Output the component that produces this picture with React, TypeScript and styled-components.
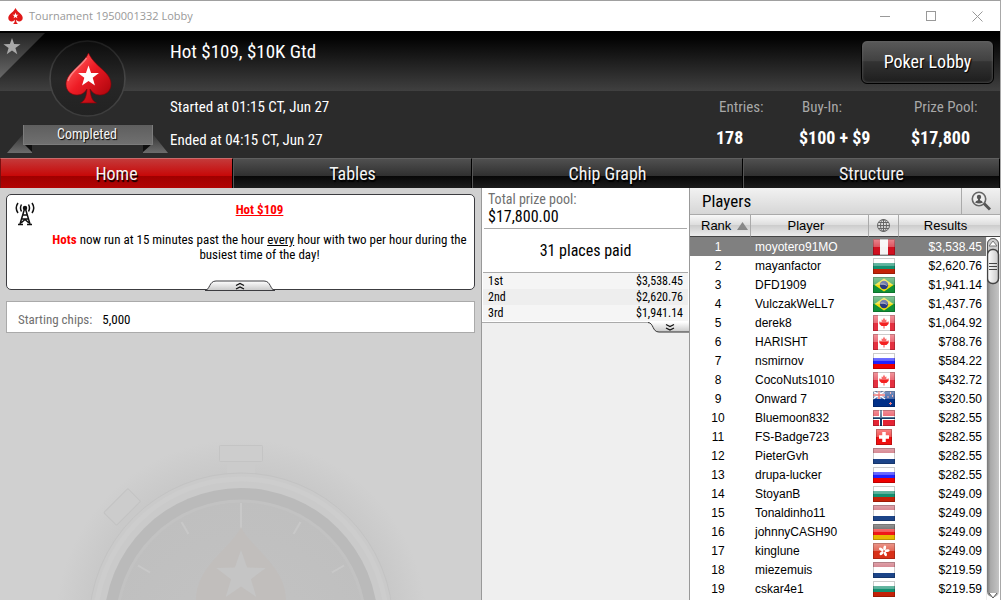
import React from 'react';
import styled, { createGlobalStyle } from 'styled-components';

const condensed = '"Roboto Condensed", "Liberation Sans Narrow", "Liberation Sans", sans-serif';
const plain = '"Liberation Sans", Arial, sans-serif';

const Global = createGlobalStyle`
  *, *::before, *::after { box-sizing: border-box; }
  body { margin: 0; font-family: ${condensed}; }
  button { font: inherit; color: inherit; background: none; border: 0; padding: 0; margin: 0; cursor: pointer; }
  svg { display: block; }
`;

const Window = styled.div`
  display: flex;
  flex-direction: column;
  height: 100vh;
  overflow: hidden;
  border-top: 1px solid #a0a0a0;
  border-right: 1px solid #a8a8a8;
  background: #fff;
`;

const TitleBar = styled.div`
  display: flex;
  align-items: center;
  flex: none;
  height: 30px;
  padding-left: 8px;
  gap: 6px;
  background: #fff;
`;

const WindowTitle = styled.h1`
  flex: 1;
  margin: 0;
  font: 400 11px/16px "Open Sans", "Noto Sans", sans-serif;
  color: #999;
`;

const WindowControls = styled.div`
  display: flex;
`;

const WindowButton = styled.button`
  display: grid;
  place-items: center;
  width: 46px;
  height: 30px;
`;

const Header = styled.header`
  display: flex;
  flex: none;
  height: 127px;
  color: #fff;
  background: linear-gradient(#000, #040404 8px, #404040 60px, #2b2b2b 60px);
`;

const Emblem = styled.div`
  display: grid;
  flex: none;
  width: 170px;
  height: 127px;

  > * { grid-area: 1 / 1; }
`;

const RibbonText = styled.div`
  align-self: end;
  width: 174px;
  padding-bottom: 15px;
  font-size: 14px;
  line-height: 18px;
  text-align: center;
  color: #f4f4f4;
  text-shadow: 1px 1px 1px #000;
`;

const HeaderBody = styled.div`
  flex: 1;
  min-width: 0;
`;

const HeaderTop = styled.div`
  display: flex;
  justify-content: space-between;
  height: 60px;
  padding: 9px 6px 0 0;
`;

const EventName = styled.h2`
  margin: 0;
  font-weight: 400;
  font-size: 19px;
  line-height: 24px;
`;

const LobbyButton = styled.button`
  width: 133px;
  height: 44px;
  border: 1px solid #000;
  border-radius: 6px;
  font-size: 18px;
  line-height: 24px;
  color: #fff;
  text-shadow: 1px 1px 1px #000;
  background: linear-gradient(#5a5a5a, #414141 48%, #333 49%, #1d1d1d);
  box-shadow: inset 0 0 3px #666;
`;

const HeaderBottom = styled.div`
  display: flex;
  justify-content: space-between;
  height: 67px;
`;

const Dates = styled.div`
  font-size: 15px;
  line-height: 33px;
  white-space: nowrap;
`;

const Stats = styled.dl`
  display: grid;
  grid-template-columns: 83px 112px 89px;
  margin: 0;
`;

const StatLabel = styled.dt`
  padding-left: 3px;
  font-size: 15px;
  line-height: 33px;
  color: #a8a8a8;
`;

const StatValue = styled.dd`
  margin: 0;
  font-size: 18px;
  line-height: 28px;
  font-weight: 700;
  white-space: nowrap;
`;

const Tabs = styled.nav`
  display: grid;
  grid-template-columns: 233fr 239fr 271fr 257fr;
  flex: none;
  height: 30px;
  background: #000;
`;

const Tab = styled.button<{ $active?: boolean }>`
  border-top: 1px solid ${p => (p.$active ? '#c96a6a' : '#606060')};
  border-right: 1px solid #000;
  border-left: 1px solid ${p => (p.$active ? '#7a1010' : '#555')};
  font-size: 18px;
  line-height: 24px;
  color: #f4f4f4;
  text-shadow: 1px 2px 1px #000;
  background: ${p => (p.$active
    ? 'linear-gradient(#c43a3a, #c80808 58%, #a00000 60%, #b20404)'
    : 'linear-gradient(#505050, #303030 58%, #080808 60%, #1c1c1c)')};
`;

const Content = styled.main`
  display: flex;
  flex: 1;
  min-height: 0;
`;

const HomePanel = styled.section`
  display: flex;
  flex-direction: column;
  flex: 1;
  min-width: 0;
  padding: 6px 6px 0;
  background: #d0d0d0;
`;

const Notice = styled.div`
  position: relative;
  flex: none;
  height: 96px;
  padding: 5px 6px 0;
  border: 1px solid #3c3c40;
  border-radius: 5px;
  font-size: 13px;
  line-height: 15px;
  text-align: center;
  background: #fff;
  color: #000;
`;

const NoticeTitle = styled.a`
  display: block;
  margin: 2px 0 15px 38px;
  font-weight: 700;
  color: #f00;
`;

const NoticeText = styled.p`
  margin: 0 0 0 38px;

  strong { color: #f00; }
`;

const NoticeIcon = styled.div`
  position: absolute;
  top: 7px;
  left: 8px;
`;

const NoticeToggle = styled.button`
  position: absolute;
  left: 50%;
  bottom: -3px;
  width: 70px;
  height: 12px;
  margin-left: -36px;
`;

const ChipsBox = styled.div`
  flex: none;
  display: flex;
  gap: 10px;
  height: 32px;
  margin-top: 11px;
  padding-left: 11px;
  border: 1px solid #aaa;
  font-size: 13px;
  line-height: 36px;
  background: #fff;

  span { color: #707070; }
`;

const Watermark = styled.svg`
  flex: none;
  align-self: center;
  margin-top: auto;
`;

const PrizePanel = styled.section`
  flex: none;
  width: 209px;
  border: 0 solid #999;
  border-width: 0 1px;
  background: #efefef;
`;

const PrizeBox = styled.div`
  border-bottom: 1px solid #aaa;
  background: #fff;
`;

const PrizeTotal = styled.div`
  height: 41px;
  margin: 0 2px;
  padding: 3px 0 0 4px;
  border-bottom: 1px solid #aaa;
  font-size: 14px;
  line-height: 17px;
  color: #707070;

  strong { display: block; font-weight: 400; font-size: 16px; color: #000; }
`;

const PlacesPaid = styled.div`
  height: 44px;
  margin: 0 1px;
  border-bottom: 1px solid #aaa;
  font-size: 16px;
  line-height: 43px;
  text-align: center;
`;

const Payouts = styled.table`
  width: calc(100% - 2px);
  margin: 0 1px 1px;
  border-collapse: collapse;
  font-size: 12px;
  line-height: 16px;

  tr { background: #f5f5f5; }
  tr:nth-child(2) { background: #eee; }
  th { padding: 0 5px; font-weight: 400; text-align: left; }
  td { padding: 0 5px; text-align: right; }
`;

const PrizeToggle = styled.button`
  display: block;
  margin: -1px 0 0 auto;
`;

const PlayersPanel = styled.section`
  display: flex;
  flex-direction: column;
  flex: none;
  width: 310px;
  background: #fff;
`;

const PlayersHead = styled.div`
  display: flex;
  flex: none;
  height: 27px;
  border-bottom: 1px solid #aaa;
  background: linear-gradient(#f2f2f2, #d6d6d6);
`;

const PlayersTitle = styled.h3`
  flex: 1;
  margin: 0;
  padding-left: 12px;
  font-weight: 400;
  font-size: 17px;
  line-height: 27px;
`;

const SearchButton = styled.button`
  display: grid;
  place-items: center;
  width: 39px;
  border-left: 1px solid #aaa;
`;

const ListArea = styled.div`
  position: relative;
  flex: 1;
  min-height: 0;
  overflow: hidden;
`;

const PlayersTable = styled.table`
  width: 100%;
  table-layout: fixed;
  border-collapse: separate;
  border-spacing: 0;
  font-family: ${plain};
  font-size: 12px;
  line-height: 18px;
`;

const HeadCell = styled.th<{ $width?: number; $shift?: number }>`
  width: ${p => (p.$width ? `${p.$width}px` : 'auto')};
  height: 22px;
  padding: 0 ${p => p.$shift ?? 0}px 0 0;
  border-bottom: 1px solid #444;
  border-left: 1px solid #aaa;
  font-weight: 400;
  font-size: 13px;
  line-height: 20px;
  text-align: center;
  background: linear-gradient(#f8f8f8, #dcdcdc 50%, #cdcdcd 50%, #ececec);

  &:first-child { border-left: 0; }
  svg { margin: 0 auto; }
`;

const SortButton = styled.button`
  display: flex;
  align-items: center;
  gap: 6px;
  padding-left: 11px;
`;

const PlayerRow = styled.tr<{ $selected?: boolean }>`
  color: ${p => (p.$selected ? '#fff' : '#000')};
  background: ${p => (p.$selected ? '#808080' : '#fff')};

  td { height: 19px; padding: 1px 0 0; }
  td:nth-child(1) { text-align: center; padding-right: 4px; }
  td:nth-child(2) { padding-left: 5px; }
  td:nth-child(3) { padding-left: 5px; }
  td:nth-child(4) { text-align: right; padding-right: 18px; }
`;

const Scrollbar = styled.div`
  position: absolute;
  top: 22px;
  right: 0;
  bottom: 0;
  width: 14px;
  border-left: 1px solid #eee;
  background: #fff;
`;

const starPath = (cx: number, cy: number, r: number) => {
  const pts: string[] = [];
  for (let i = 0; i < 10; i++) {
    const rad = i % 2 ? r * 0.4 : r;
    const a = (Math.PI * i) / 5 - Math.PI / 2;
    pts.push(`${(cx + rad * Math.cos(a)).toFixed(2)},${(cy + rad * Math.sin(a)).toFixed(2)}`);
  }
  return `M${pts.join('L')}Z`;
};

const spade =
  'M22.500 0C19 8 11 14 6 19C2 23 0 27 0 31C0 38 5 42 11 42C16 42 19 39 21 36C20.500 43 19 48 14.500 50H30.500C26 48 24.500 43 24 36C26 39 29 42 34 42C40 42 45 38 45 31C45 27 43 23 39 19C34 14 26 8 22.500 0Z';

const EmblemArt = () => (
  <svg width="170" height="127" viewBox="0 0 170 127" aria-hidden="true">
    <defs>
      <linearGradient id="red" x1="0" y1="0" x2="1" y2="1">
        <stop offset="0.15" stopColor="#ff5a5a" />
        <stop offset="0.45" stopColor="#ee1c25" />
        <stop offset="1" stopColor="#a00008" />
      </linearGradient>
      <linearGradient id="corner" x1="0" y1="0" x2="0" y2="1">
        <stop offset="0" stopColor="#242424" />
        <stop offset="1" stopColor="#686868" />
      </linearGradient>
      <linearGradient id="tail" x1="0" y1="0" x2="0" y2="1">
        <stop offset="0" stopColor="#303030" />
        <stop offset="1" stopColor="#6c6c6c" />
      </linearGradient>
      <linearGradient id="band" x1="0" y1="0" x2="0" y2="1">
        <stop offset="0" stopColor="#5e5e5e" />
        <stop offset="1" stopColor="#707070" />
      </linearGradient>
      <linearGradient id="disc" x1="0" y1="0" x2="0" y2="1">
        <stop offset="0" stopColor="#0c0c0c" />
        <stop offset="0.5" stopColor="#272727" />
        <stop offset="1" stopColor="#222" />
      </linearGradient>
      <linearGradient id="ring" x1="0" y1="0" x2="0" y2="1">
        <stop offset="0" stopColor="#1c1c1c" />
        <stop offset="0.5" stopColor="#484848" />
        <stop offset="1" stopColor="#3c3c3c" />
      </linearGradient>
    </defs>
    <path d="M0 2H45L0 47Z" fill="url(#corner)" />
    <path d={starPath(12, 16, 9)} fill="#a8a8a8" />
    <circle cx="87.500" cy="47.500" r="37.500" fill="url(#disc)" stroke="url(#ring)" strokeWidth="1.500" />
    <g transform="translate(66 22)">
      <path d={spade} fill="url(#red)" stroke="#8a0006" strokeWidth="0.600" />
      <path d="M20.500 5C16 12 4 19 2 28" fill="none" stroke="#ffa0a0" strokeWidth="1.500" opacity="0.700" />
      <path d={starPath(22.500, 23.500, 11)} fill="#fff" />
    </g>
    <path d="M24 102L7 122H32V113H24Z" fill="url(#tail)" />
    <path d="M152 102L168 122H143V113H152Z" fill="url(#tail)" />
    <path d="M24 113H32V121ZM152 113H143V121Z" fill="#0e0e0e" />
    <rect x="23.500" y="93.500" width="129" height="20" fill="url(#band)" stroke="#7c7c7c" strokeWidth="1" />
    <path d="M23 93.500H153" stroke="#2a2a2a" />
  </svg>
);

type Code = 'pe' | 'bg' | 'br' | 'ca' | 'ru' | 'nz' | 'no' | 'ch' | 'nl' | 'de' | 'hk';

const stripes: Partial<Record<Code, string[]>> = {
  bg: ['#ffffff', '#149070', '#c42208'],
  ru: ['#ffffff', '#2020ff', '#ee0000'],
  nl: ['#c04858', '#ffffff', '#1c4488'],
  de: ['#303030', '#f01818', '#e8b800'],
};

const FlagBody = ({ code }: { code: Code }) => {
  const s = stripes[code];
  if (s) {
    return (
      <>
        <rect width="22" height="6" fill={s[0]} />
        <rect y="5" width="22" height="6" fill={s[1]} />
        <rect y="11" width="22" height="5" fill={s[2]} />
      </>
    );
  }
  switch (code) {
    case 'pe':
      return <><rect width="22" height="16" fill="#d01020" /><rect x="7" width="8" height="16" fill="#f4f4f4" /></>;
    case 'br':
      return (
        <>
          <rect width="22" height="16" fill="#109038" />
          <path d="M11 1.500L20.500 8L11 14.500L1.500 8Z" fill="#f0dc10" />
          <circle cx="11" cy="8" r="4.200" fill="#283880" />
          <path d="M7.500 7Q11 6 14.500 9" stroke="#99a" fill="none" />
        </>
      );
    case 'ca':
      return (
        <>
          <rect width="22" height="16" fill="#e43040" />
          <rect x="5" width="12" height="16" fill="#fff" />
          <path d="M11 2.500L12.300 5L13.500 4.500L13.300 7L16 6.500L15.500 9L13.500 11H11.400V13.500H10.600V11H8.500L6.500 9L6 6.500L8.700 7L8.500 4.500L9.700 5Z" fill="#f42020" />
        </>
      );
    case 'nz':
      return (
        <>
          <rect width="22" height="16" fill="#003088" />
          <path d="M0 0L12 8M12 0L0 8" stroke="#fff" strokeWidth="1.500" />
          <path d="M6 0V8M0 4H12" stroke="#fff" strokeWidth="3" />
          <path d="M6 0V8M0 4H12" stroke="#e02020" strokeWidth="1.400" />
          <path d="M17.500 1v2M17 2h1M15 5v2M19.500 4v2M17.500 11v3M16 12.500h3" stroke="#f08080" />
        </>
      );
    case 'no':
      return (
        <>
          <rect width="22" height="16" fill="#e42434" />
          <path d="M8 0V16M0 8H22" stroke="#fff" strokeWidth="4" />
          <path d="M8 0V16M0 8H22" stroke="#123c68" strokeWidth="2" />
        </>
      );
    case 'ch':
      return <><rect x="3" width="16" height="16" fill="#f01010" /><path d="M11 3V13M6 8H16" stroke="#fff" strokeWidth="3.500" /></>;
    default:
      return (
        <>
          <rect width="22" height="16" fill="#d83018" />
          {[0, 72, 144, 216, 288].map(a => (
            <ellipse key={a} cx="11" cy="4.800" rx="1.400" ry="2.500" fill="#fff" transform={`rotate(${a + 12} 11 8)`} />
          ))}
        </>
      );
  }
};

const Flag = ({ code }: { code: Code }) => {
  const x = code === 'ch' ? 3 : 0;
  const w = 22 - 2 * x;
  return (
    <svg width="22" height="16" viewBox="0 0 22 16" role="img" aria-label={code}>
      <FlagBody code={code} />
      <rect x={x} width={w} height="8" fill="url(#gloss)" />
      <rect x={x + 0.5} y="0.500" width={w - 1} height="15" fill="none" stroke="#000" opacity="0.200" />
    </svg>
  );
};

const players: [string, Code, string][] = [
  ['moyotero91MO', 'pe', '$3,538.45'],
  ['mayanfactor', 'bg', '$2,620.76'],
  ['DFD1909', 'br', '$1,941.14'],
  ['VulczakWeLL7', 'br', '$1,437.76'],
  ['derek8', 'ca', '$1,064.92'],
  ['HARISHT', 'ca', '$788.76'],
  ['nsmirnov', 'ru', '$584.22'],
  ['CocoNuts1010', 'ca', '$432.72'],
  ['Onward 7', 'nz', '$320.50'],
  ['Bluemoon832', 'no', '$282.55'],
  ['FS-Badge723', 'ch', '$282.55'],
  ['PieterGvh', 'nl', '$282.55'],
  ['drupa-lucker', 'ru', '$282.55'],
  ['StoyanB', 'bg', '$249.09'],
  ['Tonaldinho11', 'nl', '$249.09'],
  ['johnnyCASH90', 'de', '$249.09'],
  ['kinglune', 'hk', '$249.09'],
  ['miezemuis', 'nl', '$219.59'],
  ['cskar4e1', 'bg', '$219.59'],
];

const Stopwatch = () => (
  <Watermark width="380" height="166" viewBox="0 0 380 166" aria-hidden="true">
    <defs>
      <radialGradient id="halo">
        <stop offset="0.780" stopColor="#c7c7c7" />
        <stop offset="1" stopColor="#d0d0d0" />
      </radialGradient>
      <radialGradient id="face" cx="0.500" cy="0.600" r="0.600">
        <stop offset="0" stopColor="#c3c3c3" />
        <stop offset="1" stopColor="#bfbfbf" />
      </radialGradient>
      <linearGradient id="gloss" x1="0" y1="0" x2="0" y2="1">
        <stop offset="0" stopColor="#fff" stopOpacity="0.500" />
        <stop offset="1" stopColor="#fff" stopOpacity="0.280" />
      </linearGradient>
    </defs>
    <circle cx="190" cy="191" r="186" fill="url(#halo)" />
    <rect x="176" y="26" width="28" height="16" fill="#cbcbcb" />
    <rect x="168.500" y="11.500" width="43" height="16" rx="1" fill="#cdcdcd" stroke="#c4c4c4" />
    <g transform="rotate(-45 190 191)">
      <rect x="177" y="32" width="26" height="14" fill="#c9c9c9" />
      <rect x="172.500" y="14.500" width="34" height="18" rx="1" fill="#cccccc" stroke="#c3c3c3" />
    </g>
    <circle cx="190" cy="191" r="152" fill="#cacaca" stroke="#c3c3c3" />
    <circle cx="190" cy="191" r="146" fill="none" stroke="#cdcdcd" strokeWidth="5" />
    <circle cx="190" cy="191" r="137" fill="#bababa" />
    <circle cx="190" cy="191" r="124" fill="url(#face)" stroke="#c2c2c2" strokeWidth="3" />
    {[-60, -30, 30, 60].map(a => (
      <path key={a} d="M190 72V86" stroke="#c8c8c8" strokeWidth="2" transform={`rotate(${a} 190 191)`} />
    ))}
    <path d="M190 69V96" stroke="#c8c8c8" strokeWidth="2" />
    <path d="M190 93C181 113 145 132 145 166H235C235 132 199 113 190 93Z" fill="#c1bebc" />
    <path d={starPath(190, 142, 26)} fill="#c5c5c5" />
  </Watermark>
);

export default function App() {
  return (
    <Window>
      <Global />
      <TitleBar>
        <svg width="15" height="16" viewBox="0 0 45 50" aria-hidden="true">
          <path d={spade} fill="#e01818" />
          <path d={starPath(22.5, 24, 10)} fill="#fff" />
        </svg>
        <WindowTitle>Tournament 1950001332 Lobby</WindowTitle>
        <WindowControls>
          <WindowButton aria-label="Minimize">
            <svg width="10" height="10"><path d="M0 5.500H10" stroke="#999" /></svg>
          </WindowButton>
          <WindowButton aria-label="Maximize">
            <svg width="10" height="10"><rect x="0.500" y="0.500" width="9" height="9" fill="none" stroke="#999" /></svg>
          </WindowButton>
          <WindowButton aria-label="Close">
            <svg width="11" height="11"><path d="M0.500 0.500L10.500 10.500M10.500 0.500L0.500 10.500" stroke="#999" /></svg>
          </WindowButton>
        </WindowControls>
      </TitleBar>

      <Header>
        <Emblem>
          <EmblemArt />
          <RibbonText>Completed</RibbonText>
        </Emblem>
        <HeaderBody>
          <HeaderTop>
            <EventName>Hot $109, $10K Gtd</EventName>
            <LobbyButton>Poker Lobby</LobbyButton>
          </HeaderTop>
          <HeaderBottom>
            <Dates>
              <div>Started at 01:15 CT, Jun 27</div>
              <div>Ended at 04:15 CT, Jun 27</div>
            </Dates>
            <Stats>
              <div><StatLabel>Entries:</StatLabel><StatValue>178</StatValue></div>
              <div><StatLabel>Buy-In:</StatLabel><StatValue>$100 + $9</StatValue></div>
              <div><StatLabel>Prize Pool:</StatLabel><StatValue>$17,800</StatValue></div>
            </Stats>
          </HeaderBottom>
        </HeaderBody>
      </Header>

      <Tabs>
        <Tab $active>Home</Tab>
        <Tab>Tables</Tab>
        <Tab>Chip Graph</Tab>
        <Tab>Structure</Tab>
      </Tabs>

      <Content>
        <HomePanel>
          <Notice>
            <NoticeIcon>
              <svg width="20" height="24" viewBox="0 0 20 24" fill="none" stroke="#111" strokeWidth="1.500">
                <path d="M9.500 7L5 22M10.500 7L15 22M8 13H12M7 17H13M6 21L10 17.500L14 21" />
                <path d="M3 22.500H8M12 22.500H17" />
                <circle cx="10" cy="6" r="1.500" fill="#111" />
                <path d="M6.500 2.500Q4.500 6 6.500 9.500M3 1Q-0.500 6 3 11M13.500 2.500Q15.500 6 13.500 9.500M17 1Q20.500 6 17 11" />
              </svg>
            </NoticeIcon>
            <NoticeTitle href="#hot">Hot $109</NoticeTitle>
            <NoticeText>
              <strong>Hots</strong>
              <span> now run at 15 minutes past the hour </span>
              <u>every</u>
              <span> hour with two per hour during the </span>
              <span>busiest time of the day!</span>
            </NoticeText>
            <NoticeToggle aria-label="Collapse">
              <svg width="70" height="12" viewBox="0 0 70 12">
                <defs>
                  <linearGradient id="knob" x1="0" y1="0" x2="0" y2="1">
                    <stop offset="0" stopColor="#fff" /><stop offset="1" stopColor="#c8c8c8" />
                  </linearGradient>
                </defs>
                <path d="M0 10.500C5 10 4 1 11 1H59C66 1 65 10 70 10.500Z" fill="url(#knob)" stroke="#3c3c40" />
                <path d="M31 5.500L35 3.500L39 5.500M31 9L35 7L39 9" fill="none" stroke="#111" strokeWidth="1.300" />
              </svg>
            </NoticeToggle>
          </Notice>
          <ChipsBox><span>Starting chips:</span>5,000</ChipsBox>
          <Stopwatch />
        </HomePanel>

        <PrizePanel>
          <PrizeBox>
            <PrizeTotal>Total prize pool:<strong>$17,800.00</strong></PrizeTotal>
            <PlacesPaid>31 places paid</PlacesPaid>
            <Payouts>
              <tbody>
                <tr><th scope="row">1st</th><td>$3,538.45</td></tr>
                <tr><th scope="row">2nd</th><td>$2,620.76</td></tr>
                <tr><th scope="row">3rd</th><td>$1,941.14</td></tr>
              </tbody>
            </Payouts>
          </PrizeBox>
          <PrizeToggle aria-label="Show all payouts">
            <svg width="41" height="11" viewBox="0 0 41 11">
              <path d="M0 0C6 1 4 10 11 10H41V0Z" fill="url(#knob)" />
              <path d="M0 0.500C6 1 4 10 11 10H41" fill="none" stroke="#333" />
              <path d="M18 2.500L22 4.500L26 2.500M18 6L22 8L26 6" fill="none" stroke="#111" strokeWidth="1.300" />
            </svg>
          </PrizeToggle>
        </PrizePanel>

        <PlayersPanel>
          <PlayersHead>
            <PlayersTitle>Players</PlayersTitle>
            <SearchButton aria-label="Find player">
              <svg width="20" height="20" viewBox="0 0 20 20">
                <circle cx="8" cy="8" r="6.700" fill="#eee" stroke="#666" strokeWidth="1.600" />
                <circle cx="8" cy="6" r="2.200" fill="#555" />
                <path d="M4 11.500Q5 9.500 7 9.200V8H9V9.200Q11 9.500 12 11.500Q8 13.500 4 11.500Z" fill="#555" />
                <path d="M13 12.500L19 18.500" stroke="#555" strokeWidth="3" />
              </svg>
            </SearchButton>
          </PlayersHead>
          <ListArea>
            <PlayersTable>
              <thead>
                <tr>
                  <HeadCell $width={60}>
                    <SortButton>
                      Rank
                      <svg width="11" height="8"><path d="M5.500 0L11 8H0Z" fill="#888" /></svg>
                    </SortButton>
                  </HeadCell>
                  <HeadCell $width={118} $shift={7}>Player</HeadCell>
                  <HeadCell $width={30} aria-label="Country">
                    <svg width="13" height="13" viewBox="0 0 13 13" fill="none" stroke="#666">
                      <circle cx="6.500" cy="6.500" r="6" />
                      <ellipse cx="6.500" cy="6.500" rx="3" ry="6" />
                      <path d="M6.500 0V13M0 6.500H13M1.500 3.500H11.500M1.500 9.500H11.500" />
                    </svg>
                  </HeadCell>
                  <HeadCell $shift={8}>Results</HeadCell>
                </tr>
              </thead>
              <tbody>
                {players.map(([name, code, result], i) => (
                  <PlayerRow key={name} $selected={i === 0}>
                    <td>{i + 1}</td>
                    <td>{name}</td>
                    <td><Flag code={code} /></td>
                    <td>{result}</td>
                  </PlayerRow>
                ))}
              </tbody>
            </PlayersTable>
            <Scrollbar aria-hidden="true">
              <svg width="13" height="100%">
                <defs>
                  <linearGradient id="track"><stop offset="0" stopColor="#777" /><stop offset="0.300" stopColor="#aaa" /><stop offset="1" stopColor="#c4c4c4" /></linearGradient>
                  <linearGradient id="thumb"><stop offset="0" stopColor="#fff" /><stop offset="1" stopColor="#c8c8c8" /></linearGradient>
                </defs>
                <rect x="0" y="1" width="12" height="99%" rx="6" fill="url(#track)" />
                <rect x="0.500" y="1.500" width="11" height="20" rx="5.500" fill="#ccc" stroke="#555" />
                <path d="M6 4L10 9H2Z" fill="#fff" stroke="#777" />
                <rect x="0.500" y="12.500" width="11" height="34" rx="5" fill="url(#thumb)" stroke="#444" strokeWidth="1.500" />
                <path d="M2 26.500H10M2 29.500H10M2 32.500H10" stroke="#444" />
                <svg y="100%" overflow="visible">
                  <path d="M2 -7L6 -2L10 -7" fill="#fff" stroke="#555" />
                </svg>
              </svg>
            </Scrollbar>
          </ListArea>
        </PlayersPanel>
      </Content>
    </Window>
  );
}
